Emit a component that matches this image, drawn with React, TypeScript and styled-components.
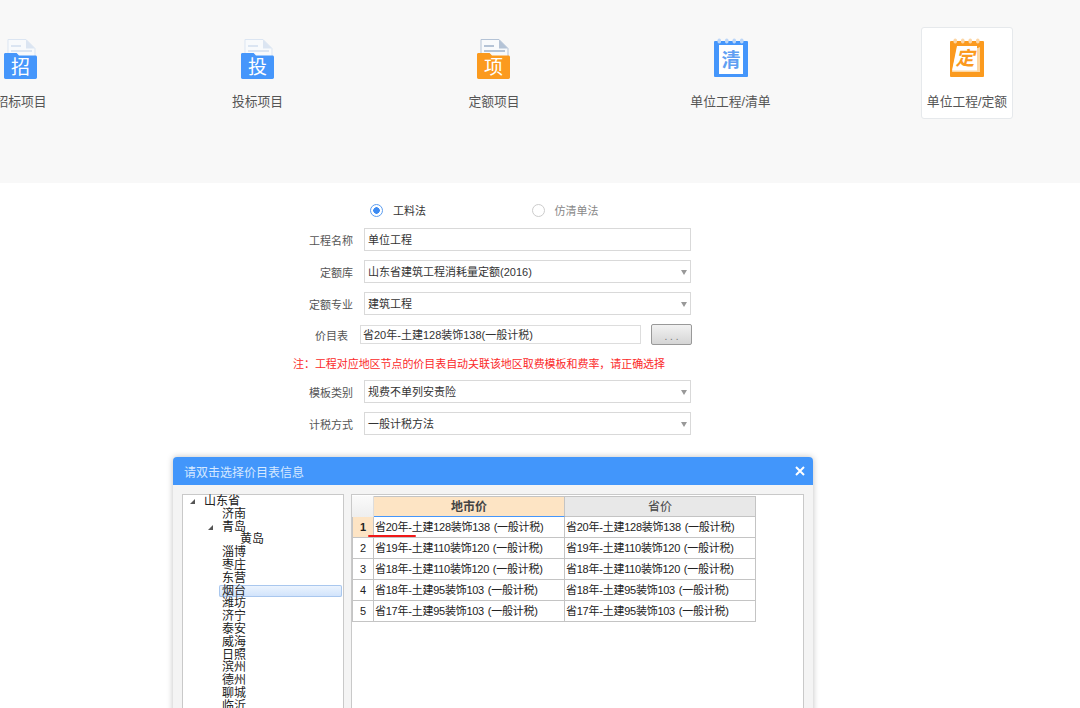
import styled, { createGlobalStyle } from 'styled-components';

const FONT = `"Liberation Sans", "Noto Sans CJK SC", sans-serif`;

const GlobalStyle = createGlobalStyle`
  html, body {
    margin: 0;
    padding: 0;
    background: #fff;
    font-family: ${FONT};
  }
  * { box-sizing: border-box; }
`;

const BLUE = '#4596fb';
const ORANGE = '#fb9a1e';

const FolderIcon = ({ color, char, paper }: { color: string; char: string; paper: string }) => (
  <svg width="36" height="42" viewBox="2 -1 36 42">
    <path d="M7 .5h18l9 9V24H7z" fill="#f8fafc" stroke={paper} strokeWidth="1" />
    <path d="M25 .5l9 9h-9z" fill={paper} />
    <rect x="10" y="6" width="10" height="2" fill={paper} />
    <rect x="10" y="11" width="21" height="2" fill={paper} />
    <path d="M3 15.500c0-1 .6-1.500 1.600-1.500h11l2.400 2.500h16.400c1 0 1.600.7 1.600 1.700v20.100c0 1-.6 1.700-1.600 1.700H4.600c-1 0-1.600-.7-1.600-1.700z" fill={color} />
    <text x="19.500" y="35" textAnchor="middle" fontSize="19" fill="#fff" fontFamily={FONT}>{char}</text>
  </svg>
);

const NotebookIcon = ({ color, char, ring, tilted }: { color: string; char: string; ring: string; tilted?: boolean }) => (
  <svg width="36" height="42" viewBox="0 0 36 42">
    <rect x="1" y="3" width="34" height="36" rx="1" fill={color} />
    {[6, 13.500, 21, 28.500].map((x) => (
      <rect key={x} x={x - 1.5} y="0.500" width="3.500" height="5" rx="1.700" fill={ring} />
    ))}
    {tilted ? (
      <>
        <path d="M31 34V9l-2 1H8L3 34z" fill="#fdd7a3" />
        <path d="M8 8h20v24.500H3z" fill="#fff" />
        <text x="16" y="27" textAnchor="middle" fontSize="19" fontWeight="700" fontStyle="italic" fill={color} fontFamily={FONT}>{char}</text>
      </>
    ) : (
      <>
        <rect x="6" y="7" width="24" height="29" fill="#fff" />
        <text x="18" y="29" textAnchor="middle" fontSize="19" fontWeight="700" fill="#609ff2" fontFamily={FONT}>{char}</text>
      </>
    )}
  </svg>
);

const TOP_ITEMS = [
  { label: '招标项目', icon: <FolderIcon color={BLUE} char="招" paper="#dbe5f2" /> },
  { label: '投标项目', icon: <FolderIcon color={BLUE} char="投" paper="#dbe5f2" /> },
  { label: '定额项目', icon: <FolderIcon color={ORANGE} char="项" paper="#b4c3d6" /> },
  { label: '单位工程/清单', icon: <NotebookIcon color={BLUE} char="清" ring="#bcd6f8" /> },
  { label: '单位工程/定额', icon: <NotebookIcon color={ORANGE} char="定" ring="#fcd6a6" tilted />, active: true },
];

const TREE = [
  { name: '山东省', depth: 0, arrow: true },
  { name: '济南', depth: 1 },
  { name: '青岛', depth: 1, arrow: true },
  { name: '黄岛', depth: 2 },
  { name: '淄博', depth: 1 },
  { name: '枣庄', depth: 1 },
  { name: '东营', depth: 1 },
  { name: '烟台', depth: 1, selected: true },
  { name: '潍坊', depth: 1 },
  { name: '济宁', depth: 1 },
  { name: '泰安', depth: 1 },
  { name: '威海', depth: 1 },
  { name: '日照', depth: 1 },
  { name: '滨州', depth: 1 },
  { name: '德州', depth: 1 },
  { name: '聊城', depth: 1 },
  { name: '临沂', depth: 1 },
];

const ROWS = [
  '省20年-土建128装饰138 (一般计税)',
  '省19年-土建110装饰120 (一般计税)',
  '省18年-土建110装饰120 (一般计税)',
  '省18年-土建95装饰103 (一般计税)',
  '省17年-土建95装饰103 (一般计税)',
];

const SELECT_ROWS_TOP = [
  { label: '定额库', value: '山东省建筑工程消耗量定额(2016)' },
  { label: '定额专业', value: '建筑工程' },
];

const SELECT_ROWS_BOTTOM = [
  { label: '模板类别', value: '规费不单列安责险' },
  { label: '计税方式', value: '一般计税方法' },
];

const App = () => {
  return (
    <Page>
      <GlobalStyle />
      <TopBand>
        <TopRow>
          {TOP_ITEMS.map((item) => (
            <TopItem key={item.label} $active={item.active}>
              {item.icon}
              <TopLabel>{item.label}</TopLabel>
            </TopItem>
          ))}
        </TopRow>
      </TopBand>

      <Form>
        <RadioRow>
          <RadioOption>
            <Radio $checked />
            <RadioText>工料法</RadioText>
          </RadioOption>
          <RadioOption>
            <Radio />
            <RadioText $muted>仿清单法</RadioText>
          </RadioOption>
        </RadioRow>

        <FormRow>
          <Label>工程名称</Label>
          <Field>单位工程</Field>
        </FormRow>

        {SELECT_ROWS_TOP.map((row) => (
          <FormRow key={row.label}>
            <Label>{row.label}</Label>
            <Field>
              {row.value}
              <Caret />
            </Field>
          </FormRow>
        ))}

        <PriceRow>
          <PriceLabel>价目表</PriceLabel>
          <PriceField>省20年-土建128装饰138(一般计税)</PriceField>
          <DotsButton>. . .</DotsButton>
        </PriceRow>

        <Note>注：工程对应地区节点的价目表自动关联该地区取费模板和费率，请正确选择</Note>

        {SELECT_ROWS_BOTTOM.map((row) => (
          <FormRow key={row.label}>
            <Label>{row.label}</Label>
            <Field>
              {row.value}
              <Caret />
            </Field>
          </FormRow>
        ))}
      </Form>

      <Dialog>
        <DialogHeader>
          <span>请双击选择价目表信息</span>
          <CloseIcon width="10" height="10" viewBox="0 0 10 10">
            <path d="M1 1l8 8M9 1l-8 8" stroke="#fff" strokeWidth="2" />
          </CloseIcon>
        </DialogHeader>
        <DialogBody>
          <TreePanel>
            {TREE.map((node) => (
              <TreeNode key={node.name} $depth={node.depth}>
                {node.arrow && <TreeArrow />}
                <TreeText $selected={node.selected}>{node.name}</TreeText>
              </TreeNode>
            ))}
          </TreePanel>
          <GridPanel>
            <PriceGrid>
              <Corner />
              <HeadCell $active>地市价</HeadCell>
              <HeadCell>省价</HeadCell>
              {ROWS.map((text, i) => (
                <GridRow key={text}>
                  <RowNumber $active={i === 0}>{i + 1}</RowNumber>
                  <Cell>
                    {text}
                    {i === 0 && <RedMark />}
                  </Cell>
                  <Cell>{text}</Cell>
                </GridRow>
              ))}
            </PriceGrid>
          </GridPanel>
        </DialogBody>
      </Dialog>
    </Page>
  );
};

export default App;

const Page = styled.div`
  position: relative;
  width: 1080px;
  height: 708px;
  overflow: hidden;
  background: #fff;
`;

const TopBand = styled.div`
  height: 183px;
  padding-top: 27px;
  background: #f8f8f8;
`;

const TopRow = styled.div`
  display: flex;
  gap: 144.500px;
  margin-left: -25px;
`;

const TopItem = styled.div<{ $active?: boolean }>`
  flex: none;
  width: 92px;
  height: 92px;
  padding-top: 10px;
  display: flex;
  flex-direction: column;
  align-items: center;
  border: 1px solid ${({ $active }) => ($active ? '#e6e9ec' : 'transparent')};
  border-radius: 3px;
  background: ${({ $active }) => ($active ? '#fff' : 'transparent')};
`;

const TopLabel = styled.div`
  margin-top: 14px;
  font-size: 12.800px;
  line-height: 16px;
  color: #555;
  white-space: nowrap;
`;

const Form = styled.div`
  width: 400px;
  margin-left: 293px;
  padding-top: 17px;
  font-size: 11px;
  color: #444;
`;

const RadioRow = styled.div`
  display: flex;
  height: 20px;
  margin-left: 77px;
  margin-bottom: 8px;
`;

const RadioOption = styled.div`
  width: 163px;
  display: flex;
  align-items: center;
  gap: 10px;
`;

const Radio = styled.span<{ $checked?: boolean }>`
  width: 13px;
  height: 13px;
  border-radius: 50%;
  border: 1px solid ${({ $checked }) => ($checked ? '#5b9df0' : '#ccc')};
  background: ${({ $checked }) =>
    $checked ? 'radial-gradient(circle, #3d8bf2 0 3px, #fff 3.5px)' : '#fff'};
`;

const RadioText = styled.span<{ $muted?: boolean }>`
  color: ${({ $muted }) => ($muted ? '#888' : '#333')};
`;

const FormRow = styled.div`
  display: flex;
  align-items: center;
  height: 23px;
  margin-bottom: 9px;
`;

const Label = styled.div`
  width: 60px;
  text-align: right;
  margin-right: 11px;
  color: #555;
`;

const Field = styled.div`
  position: relative;
  width: 327px;
  height: 23px;
  padding-left: 3px;
  line-height: 23px;
  border: 1px solid #d9d9d9;
  color: #333;
`;

const Caret = styled.span`
  position: absolute;
  right: 3px;
  top: 9px;
  border-left: 3.500px solid transparent;
  border-right: 3.500px solid transparent;
  border-top: 5px solid #999;
`;

const PriceRow = styled.div`
  display: flex;
  align-items: center;
  height: 21px;
  margin-top: 1px;
  margin-bottom: 11px;
`;

const PriceLabel = styled.div`
  width: 55px;
  text-align: right;
  margin-right: 12px;
  color: #555;
`;

const PriceField = styled.div`
  width: 281px;
  height: 19px;
  padding-left: 2px;
  line-height: 19px;
  border: 1px solid #ddd;
  color: #333;
`;

const DotsButton = styled.div`
  width: 41px;
  height: 21px;
  margin-left: 10px;
  text-align: center;
  line-height: 24px;
  font-size: 10px;
  border: 1px solid #999;
  border-radius: 2px;
  background: linear-gradient(#f2f2f2, #d5d5d5);
  color: #777;
`;

const Note = styled.div`
  height: 16px;
  margin-bottom: 8px;
  line-height: 16px;
  letter-spacing: -0.06px;
  color: #fb2a2a;
  white-space: nowrap;
`;

const Dialog = styled.div`
  position: absolute;
  left: 173px;
  top: 457px;
  width: 640px;
  height: 300px;
  border-radius: 4px 4px 0 0;
  background: #f4f4f4;
  box-shadow: 0 0 6px rgba(0, 0, 0, 0.25);
  overflow: hidden;
`;

const DialogHeader = styled.div`
  height: 28px;
  padding: 0 8px 0 11px;
  display: flex;
  align-items: center;
  justify-content: space-between;
  background: #4296fb;
  color: #d7e9ff;
  font-size: 12px;
`;

const CloseIcon = styled.svg`
  display: block;
`;

const DialogBody = styled.div`
  display: flex;
  gap: 7px;
  padding: 9px 9px 0;
`;

const TreePanel = styled.div`
  width: 162px;
  height: 260px;
  border: 1px solid #c9c9c9;
  background: #fff;
  font-size: 12px;
  color: #222;
`;

const TreeNode = styled.div<{ $depth: number }>`
  position: relative;
  height: 12.800px;
  padding-left: ${({ $depth }) => 21 + $depth * 18}px;
  line-height: 12.800px;
  white-space: nowrap;
`;

const TreeArrow = styled.span`
  position: absolute;
  margin-left: -14px;
  top: 4px;
  width: 0;
  height: 0;
  border-left: 5px solid transparent;
  border-bottom: 5px solid #555;
`;

const TreeText = styled.span<{ $selected?: boolean }>`
  display: block;
  ${({ $selected }) =>
    $selected
      ? `
    margin: 0 1px 0 -3px;
    padding-left: 3px;
    border-radius: 2px;
    box-shadow: inset 0 0 0 1px #a9c7ee;
    background: linear-gradient(#eef5fe, #cfe2fb);
  `
      : ''}
`;

const GridPanel = styled.div`
  width: 453px;
  height: 260px;
  padding-top: 1px;
  border: 1px solid #c9c9c9;
  background: #fff;
`;

const PriceGrid = styled.div`
  display: grid;
  grid-template-columns: 22px 191px 191px;
  grid-auto-rows: 21px;
  width: 404px;
  font-size: 11px;
  color: #222;
`;

const Corner = styled.div`
  background: linear-gradient(#fafafa, #eee);
  border-right: 1px solid #ddd;
`;

const HeadCell = styled.div<{ $active?: boolean }>`
  text-align: center;
  line-height: 20px;
  font-size: 12px;
  font-weight: ${({ $active }) => ($active ? 700 : 400)};
  color: #444;
  background: ${({ $active }) => ($active ? '#fde4c4' : '#e8e8e8')};
  border: 1px solid #c4c4c4;
  border-bottom: 1px solid ${({ $active }) => ($active ? '#4596fb' : '#c4c4c4')};
  border-left: none;
`;

const GridRow = styled.div`
  display: contents;
`;

const RowNumber = styled.div<{ $active?: boolean }>`
  text-align: center;
  line-height: 21px;
  font-weight: ${({ $active }) => ($active ? 700 : 400)};
  background: ${({ $active }) => ($active ? '#fde4c4' : '#fff')};
  border: 1px solid #c4c4c4;
  border-top: none;
`;

const Cell = styled.div`
  position: relative;
  padding-left: 1px;
  line-height: 20px;
  letter-spacing: -0.25px;
  word-spacing: 1px;
  white-space: nowrap;
  border-right: 1px solid #c4c4c4;
  border-bottom: 1px solid #c4c4c4;
`;

const RedMark = styled.span`
  position: absolute;
  left: -6px;
  top: 18px;
  width: 48px;
  height: 2px;
  border-radius: 1px;
  background: #f01818;
`;
